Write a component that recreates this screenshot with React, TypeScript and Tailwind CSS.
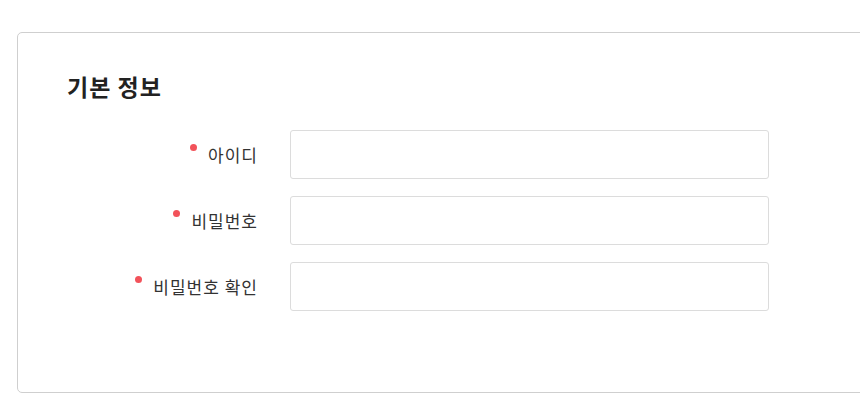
import React from 'react';

const fields = ['아이디', '비밀번호', '비밀번호 확인'];

function FieldRow({ label }: { label: string }) {
  return (
    <div className="flex items-center">
      <label className="flex w-[190px] items-center justify-end text-[17px] text-[#333]">
        <span className="mb-[14px] mr-[11px] h-[7px] w-[7px] shrink-0 rounded-full bg-[#f2525a]" />
        <span className="mr-[-1px] tracking-[1px]">{label}</span>
      </label>
      <input
        type="text"
        className="ml-[33px] h-[49px] w-[479px] rounded-[3px] border border-[#dcdcdc] bg-white px-3 outline-none"
      />
    </div>
  );
}

export default function App() {
  return (
    <div
      className="h-[400px] w-[860px] overflow-hidden bg-white pl-[17px] pt-[32px]"
      style={{ fontFamily: '"Noto Sans CJK KR", "Noto Sans", sans-serif' }}
    >
      <div className="h-[361px] w-[900px] rounded-[5px] border border-[#cfcfcf] pl-[49px] pt-[37px]">
        <h2 className="text-[23px] font-bold leading-[32px] tracking-[1px] text-[#222]">기본 정보</h2>
        <div className="mt-[28px] flex flex-col gap-[17px]">
          {fields.map(f => (
            <FieldRow key={f} label={f} />
          ))}
        </div>
      </div>
    </div>
  );
}
